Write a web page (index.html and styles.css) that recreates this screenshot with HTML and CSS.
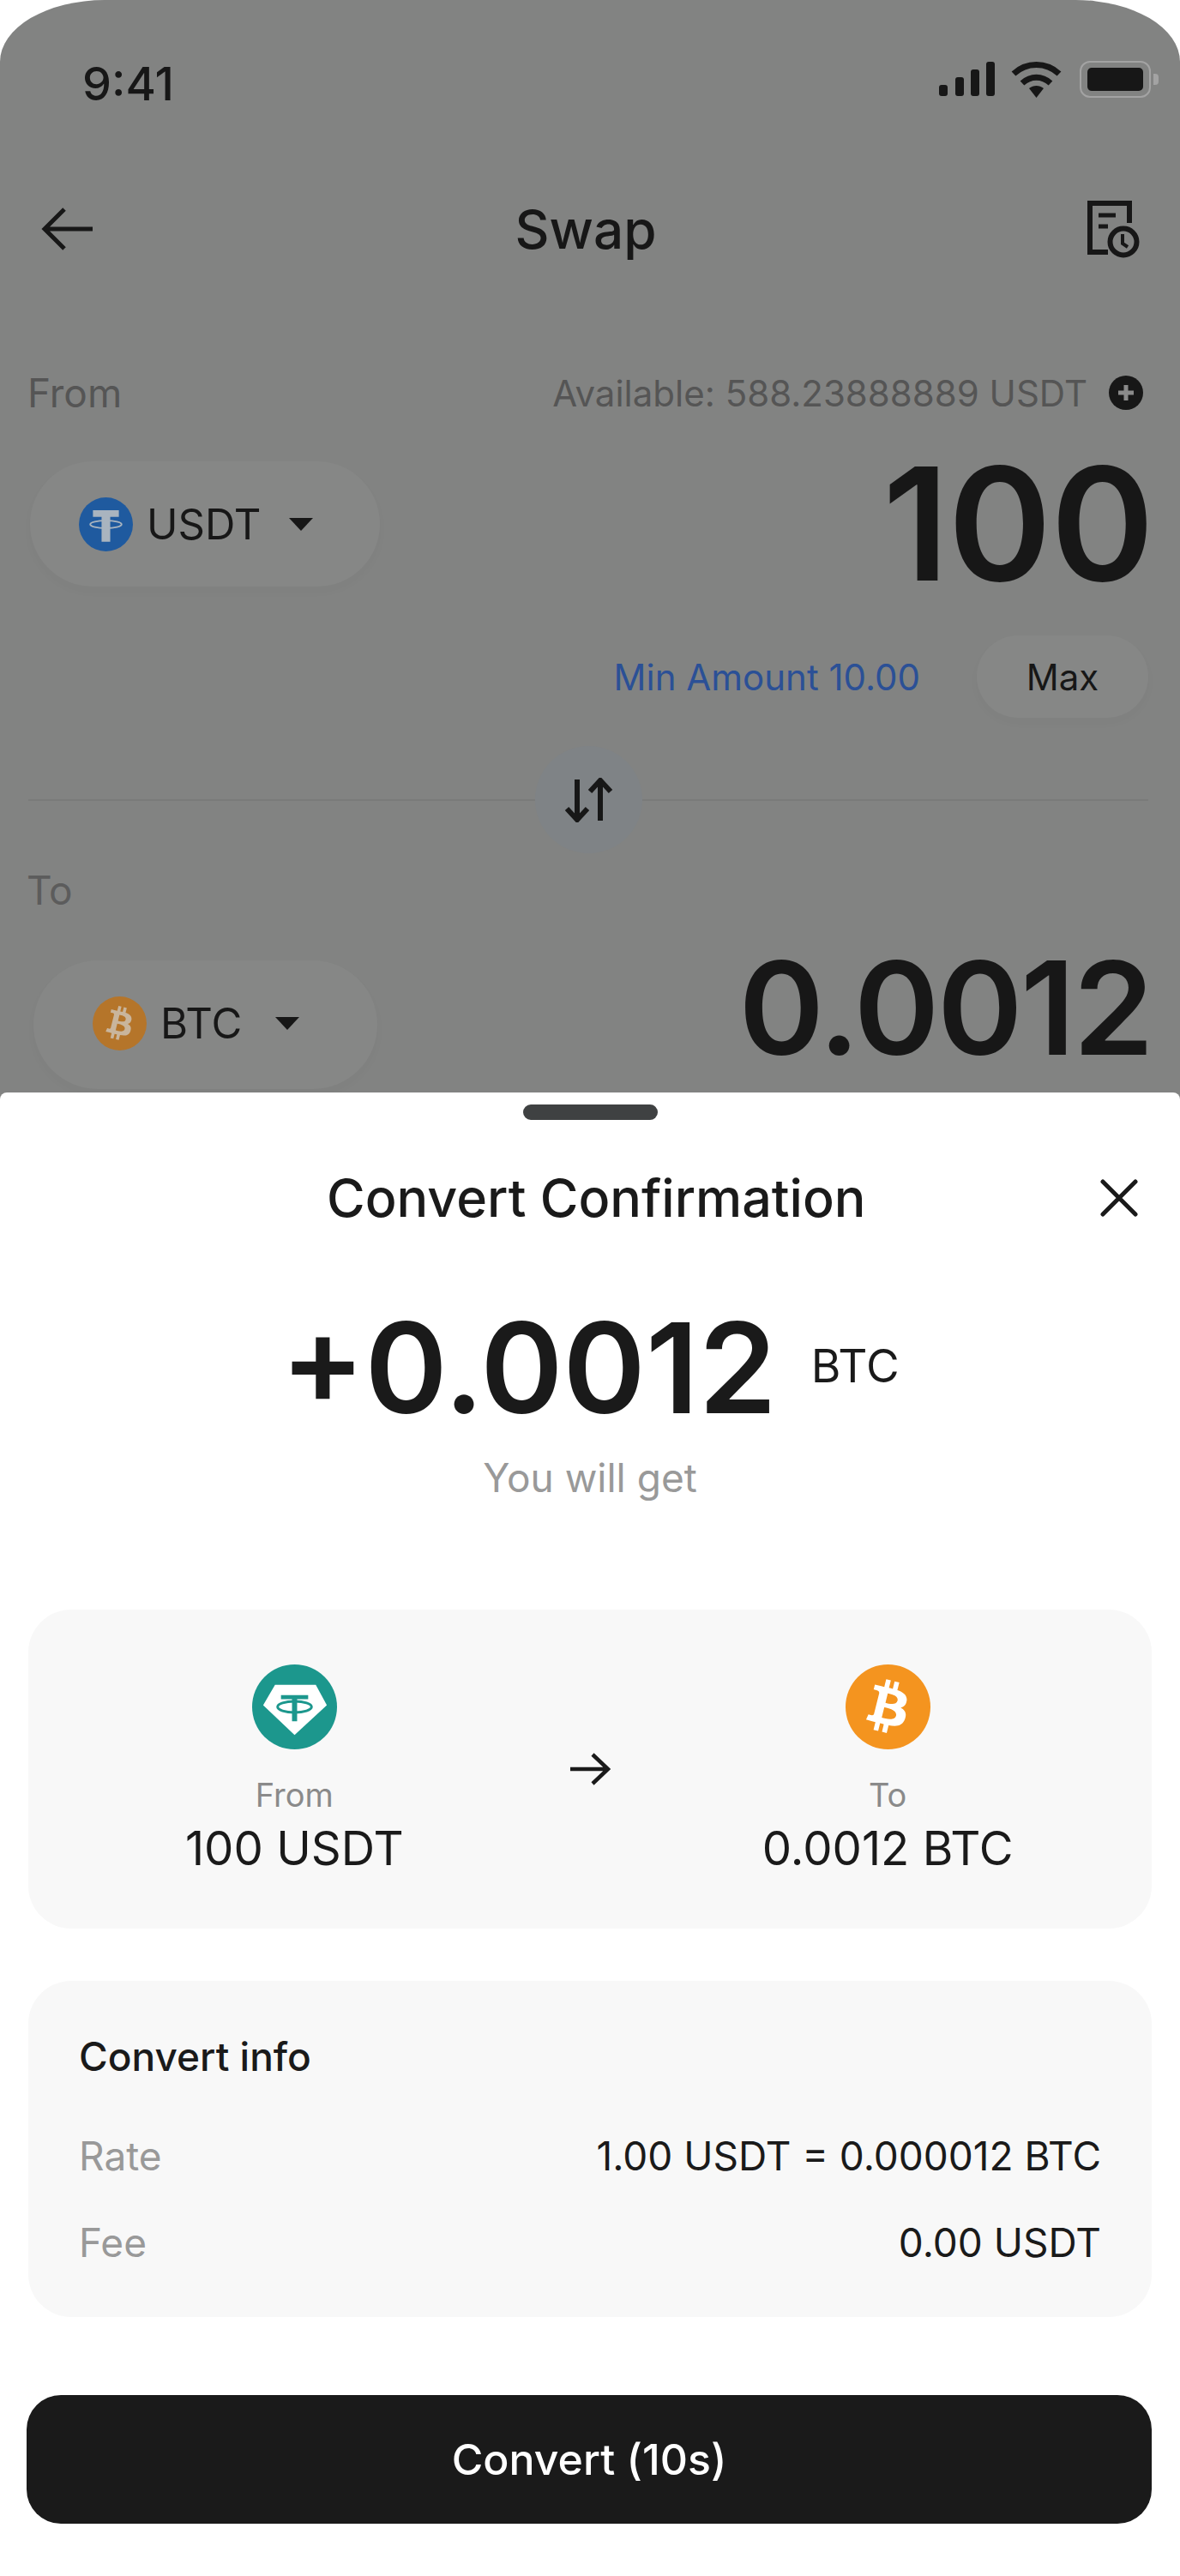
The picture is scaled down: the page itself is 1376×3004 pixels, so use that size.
FILE: index.html
```html
<!DOCTYPE html>
<html lang="en">
<head>
  <meta charset="UTF-8">
  <meta name="viewport" content="width=device-width, initial-scale=1.0">
  <title>Swap</title>
  <link rel="stylesheet" href="styles.css">
</head>
<body>
  <!-- Swap form, dimmed behind the sheet -->
  <div class="page">
    <div class="status">
      <span class="clock">9:41</span>
      <div class="status-icons">
        <svg class="signal" viewBox="0 0 65 40"><rect x="0" y="27" width="10" height="13" rx="3"/><rect x="19" y="18" width="10" height="22" rx="3"/><rect x="37" y="9" width="10" height="31" rx="3"/><rect x="55" y="0" width="10" height="40" rx="3"/></svg>
        <svg class="wifi" viewBox="0 0 59 43"><path d="M3 15C18 1 41 1 56 15" fill="none" stroke="#171717" stroke-width="7"/><path d="M13 26C23 17 36 17 46 26" fill="none" stroke="#171717" stroke-width="7"/><path d="M21 32C26 28 33 28 38 32L29.5 43Z"/></svg>
        <div class="battery"><div class="battery-body"><div class="battery-fill"></div></div><div class="battery-cap"></div></div>
      </div>
    </div>
    <div class="nav">
      <svg class="back" viewBox="0 0 62 50"><path d="M60 25H4M27 2L4 25L27 48" fill="none" stroke="#171717" stroke-width="5"/></svg>
      <span class="nav-title">Swap</span>
      <svg class="history" viewBox="0 0 61 67"><path d="M24 60H3V3H49V26" fill="none" stroke="#171717" stroke-width="6"/><path d="M13 17H33M13 30H24" fill="none" stroke="#171717" stroke-width="5"/><circle cx="42" cy="48" r="15.500" fill="none" stroke="#171717" stroke-width="6"/><path d="M41 39V50L47 54" fill="none" stroke="#171717" stroke-width="4"/></svg>
    </div>
    <div class="field-head">
      <span class="field-label">From</span>
      <div class="available">
        <span>Available: 588.23888889 USDT</span>
        <svg class="plus" viewBox="0 0 40 40"><circle cx="20" cy="20" r="20" fill="#171717"/><path d="M20 11V29M11 20H29" stroke="#8a8a8a" stroke-width="5"/></svg>
      </div>
    </div>
    <div class="amount-row">
      <button class="coin-pill">
        <svg class="coin" viewBox="0 0 100 100"><circle cx="50" cy="50" r="50" fill="#1f5a9f"/><path d="M26 24H74V36H58V82H42V36H26Z" fill="#a9b4bf"/><ellipse cx="50" cy="50" rx="29" ry="7" fill="none" stroke="#a9b4bf" stroke-width="3"/></svg>
        <span class="coin-name">USDT</span>
        <span class="caret"></span>
      </button>
      <span class="amount">100</span>
    </div>
    <div class="min-row">
      <span class="min-amount">Min Amount 10.00</span>
      <button class="max-btn">Max</button>
    </div>
    <div class="divider">
      <div class="divider-line"></div>
      <div class="swap-btn">
        <svg viewBox="0 0 57 52"><path d="M15 2V48M3 36L15 49L27 36" fill="none" stroke="#171717" stroke-width="6"/><path d="M42 50V4M30 16L42 3L54 16" fill="none" stroke="#171717" stroke-width="6"/></svg>
      </div>
      <div class="divider-line"></div>
    </div>
    <div class="to-label">To</div>
    <div class="amount-row amount-row-to">
      <button class="coin-pill coin-pill-btc">
        <svg class="coin" viewBox="0 0 24 24"><circle cx="12" cy="12" r="12" fill="#b5752a"/><path fill="#c9b59c" fill-rule="evenodd" d="M17.288 10.291c.24-1.59-.974-2.45-2.64-3.03l.54-2.153-1.315-.33-.525 2.107c-.345-.087-.705-.167-1.064-.25l.526-2.127-1.32-.33-.54 2.165c-.285-.067-.565-.132-.84-.2l-1.815-.45-.35 1.407s.975.225.955.236c.535.136.63.486.615.766l-1.477 5.92c-.075.166-.24.406-.614.314.015.02-.96-.24-.96-.24l-.66 1.51 1.71.426.93.242-.54 2.19 1.32.327.54-2.17c.36.1.705.19 1.05.273l-.51 2.154 1.32.33.545-2.19c2.24.427 3.93.257 4.64-1.774.57-1.637-.03-2.58-1.217-3.196.854-.193 1.5-.76 1.68-1.93h.01zm-3.01 4.22c-.404 1.64-3.157.75-4.05.53l.72-2.9c.896.23 3.757.67 3.33 2.37zm.41-4.24c-.37 1.49-2.662.735-3.405.55l.654-2.64c.744.18 3.137.524 2.75 2.084v.006z"/></svg>
        <span class="coin-name">BTC</span>
        <span class="caret"></span>
      </button>
      <span class="amount amount-to">0.0012</span>
    </div>
  </div>

  <!-- Confirmation sheet -->
  <div class="sheet">
    <div class="handle"></div>
    <div class="sheet-head">
      <h2>Convert Confirmation</h2>
      <svg class="close" viewBox="0 0 44 44"><path d="M3 3L41 41M41 3L3 41" fill="none" stroke="#1a1a1a" stroke-width="5" stroke-linecap="round"/></svg>
    </div>
    <div class="total">
      <span class="total-value">+0.0012</span>
      <span class="total-unit">BTC</span>
    </div>
    <div class="total-note">You will get</div>

    <div class="card pair">
      <div class="pair-side">
        <svg class="pair-icon" viewBox="0 0 100 100"><circle cx="50" cy="50" r="50" fill="#1c978d"/><path d="M27 24H75L88 48L50 83L13 48Z" fill="#fff"/><path d="M34 36H66V41H53V67H47V41H34Z" fill="#1c978d"/><ellipse cx="50" cy="50" rx="20" ry="6.500" fill="none" stroke="#1c978d" stroke-width="3"/></svg>
        <div class="pair-label">From</div>
        <div class="pair-value">100 USDT</div>
      </div>
      <svg class="pair-arrow" viewBox="0 0 47 38"><path d="M0 19H44M26 2L44 19L26 36" fill="none" stroke="#1a1a1a" stroke-width="4.500"/></svg>
      <div class="pair-side pair-side-to">
        <svg class="pair-icon" viewBox="0 0 24 24"><circle cx="12" cy="12" r="12" fill="#f4941f"/><path fill="#fff" fill-rule="evenodd" d="M17.288 10.291c.24-1.59-.974-2.45-2.64-3.03l.54-2.153-1.315-.33-.525 2.107c-.345-.087-.705-.167-1.064-.25l.526-2.127-1.32-.33-.54 2.165c-.285-.067-.565-.132-.84-.2l-1.815-.45-.35 1.407s.975.225.955.236c.535.136.63.486.615.766l-1.477 5.92c-.075.166-.24.406-.614.314.015.02-.96-.24-.96-.24l-.66 1.51 1.71.426.93.242-.54 2.19 1.32.327.54-2.17c.36.1.705.19 1.05.273l-.51 2.154 1.32.33.545-2.19c2.24.427 3.93.257 4.64-1.774.57-1.637-.03-2.58-1.217-3.196.854-.193 1.5-.76 1.68-1.93h.01zm-3.01 4.22c-.404 1.64-3.157.75-4.05.53l.72-2.9c.896.23 3.757.67 3.33 2.37zm.41-4.24c-.37 1.49-2.662.735-3.405.55l.654-2.64c.744.18 3.137.524 2.75 2.084v.006z"/></svg>
        <div class="pair-label">To</div>
        <div class="pair-value">0.0012 BTC</div>
      </div>
    </div>

    <div class="card info">
      <div class="info-title">Convert info</div>
      <div class="info-row"><span class="info-key">Rate</span><span>1.00 USDT = 0.000012 BTC</span></div>
      <div class="info-row"><span class="info-key">Fee</span><span>0.00 USDT</span></div>
    </div>

    <button class="confirm">Convert (10s)</button>
  </div>
</body>
</html>
```

FILE: styles.css
```css
* { box-sizing: border-box; }
body {
  margin: 0;
  background: #fff;
  color: #1a1a1a;
  font-family: Inter, "Liberation Sans", sans-serif;
}
button { font-family: inherit; border: none; }

/* dimmed page: colours are the ones seen through the backdrop */
.page {
  height: 1282px;
  overflow: hidden;
  background: #828382;
  border-radius: 122px 122px 0 0 / 72px 72px 0 0;
  color: #171717;
}
.status {
  height: 184px;
  padding: 0 25px 0 96px;
  display: flex; justify-content: space-between; align-items: center;
}
.clock { font-size: 54px; font-weight: 500; padding-top: 10px; }
.status-icons { display: flex; align-items: center; gap: 19px; }
.signal { width: 65px; height: 40px; fill: #171717; }
.wifi { width: 59px; height: 43px; fill: #171717; margin-right: 2px; }
.battery { display: flex; align-items: center; gap: 3px; }
.battery-body {
  width: 83px; height: 43px; padding: 6px 7px;
  border: 2px solid #a3a3a3; border-radius: 12px;
}
.battery-fill { height: 100%; background: #171717; border-radius: 5px; }
.battery-cap { width: 6px; height: 13px; background: #a3a3a3; border-radius: 0 4px 4px 0; }

.nav {
  height: 166px;
  padding: 0 47px 0 48px;
  display: flex; justify-content: space-between; align-items: center;
}
.back { width: 62px; height: 50px; }
.nav-title { font-size: 62px; font-weight: 500; margin-left: -12px; }
.history { width: 61px; height: 67px; }

.field-head {
  margin-top: 78px;
  height: 60px;
  padding: 0 43px 0 32px;
  display: flex; justify-content: space-between; align-items: center;
  color: #555;
}
.field-label { font-size: 46px; }
.available { display: flex; align-items: center; gap: 25px; font-size: 42px; }
.plus { width: 40px; height: 40px; }

.amount-row {
  margin-top: 50px;
  padding: 0 31px 0 35px;
  display: flex; justify-content: space-between; align-items: center;
}
.amount-row-to { margin-top: 52px; padding: 0 33px 0 39px; align-items: flex-start; }
.coin-pill {
  height: 146px;
  padding: 0 78px 0 57px;
  display: flex; align-items: center;
  background: #868786;
  border-radius: 73px;
  box-shadow: 0 6px 14px rgba(0,0,0,0.02);
  color: #171717;
}
.coin-pill-btc { height: 150px; padding: 0 91px 4px 69px; border-radius: 75px; }
.coin { width: 63px; height: 63px; margin-right: 16px; }
.coin-name { font-size: 49px; }
.caret {
  margin-left: 33px;
  border-left: 14px solid transparent;
  border-right: 14px solid transparent;
  border-top: 15px solid #171717;
}
.coin-pill-btc .caret { margin-left: 39px; }
.amount { font-size: 183px; font-weight: 600; line-height: 146px; letter-spacing: -1px; }
.amount-to { font-size: 151px; line-height: 110px; letter-spacing: -2.500px; }

.min-row {
  margin-top: 57px;
  padding-right: 37px;
  display: flex; justify-content: flex-end; align-items: center; gap: 66px;
}
.min-amount { font-size: 42px; color: #2b5096; }
.max-btn {
  width: 200px; height: 96px;
  background: #868786;
  border-radius: 48px;
  box-shadow: 0 6px 14px rgba(0,0,0,0.02);
  font-size: 42px;
  color: #171717;
}
.divider {
  margin-top: 33px;
  padding: 0 37px 0 33px;
  display: flex; align-items: center;
}
.divider-line { flex: 1; height: 2px; background: #7a7b7a; }
.swap-btn {
  width: 125px; height: 125px;
  background: #7f8386;
  border-radius: 50%;
  display: flex; align-items: center; justify-content: center;
}
.swap-btn svg { width: 57px; height: 52px; }
.to-label {
  margin-top: 13px;
  padding-left: 31px;
  font-size: 46px; line-height: 60px;
  color: #5c5c5c;
}

/* sheet overlaps the page by its corner radius */
.sheet {
  position: relative;
  height: 1738px;
  margin-top: -8px;
  padding: 14px 33px 0;
  background: #fff;
  border-radius: 8px 8px 0 0;
}
.handle {
  width: 157px; height: 18px;
  margin: 0 auto;
  background: #3f4142;
  border-radius: 9px;
}
.sheet-head {
  margin-top: 34px;
  height: 114px;
  padding: 0 16px 0 348px;
  display: flex; justify-content: space-between; align-items: center;
}
.sheet-head h2 { margin: 0; font-size: 61px; font-weight: 500; }
.close { width: 44px; height: 44px; }
.total {
  margin-top: 61px;
  height: 160px;
  display: flex; justify-content: center; align-items: center; gap: 40px;
}
.total-value { font-size: 146px; font-weight: 600; }
.total-unit { font-size: 53px; margin-bottom: 4px; }
.total-note {
  margin-top: 18px;
  text-align: center;
  font-size: 46px; line-height: 60px;
  color: #999;
}
.card { background: #f8f8f8; border-radius: 50px; }
.pair {
  margin-top: 124px;
  height: 372px;
  display: grid;
  grid-template-columns: 1fr 69px 1fr;
  align-items: center;
}
.pair-side { display: flex; flex-direction: column; align-items: center; }
.pair-side-to { padding-left: 5px; }
.pair-icon { width: 99px; height: 99px; }
.pair-label { margin-top: 28px; font-size: 38px; line-height: 50px; color: #8a8a8a; }
.pair-value { margin-top: 7px; font-size: 54.500px; line-height: 60px; }
.pair-arrow { width: 47px; height: 38px; justify-self: center; }
.info {
  margin-top: 61px;
  height: 392px;
  padding: 58px 59px 0;
  font-size: 46px; line-height: 60px;
}
.info-title { font-weight: 500; }
.info-row { display: flex; justify-content: space-between; margin-top: 41px; }
.info-title + .info-row { margin-top: 56px; }
.info-key { color: #999; }
.confirm {
  display: block;
  width: 1312px; height: 150px;
  margin: 91px 0 0 -2px;
  background: #1a1a1a;
  border-radius: 40px;
  color: #fff;
  font-size: 50px; font-weight: 500;
}
```
